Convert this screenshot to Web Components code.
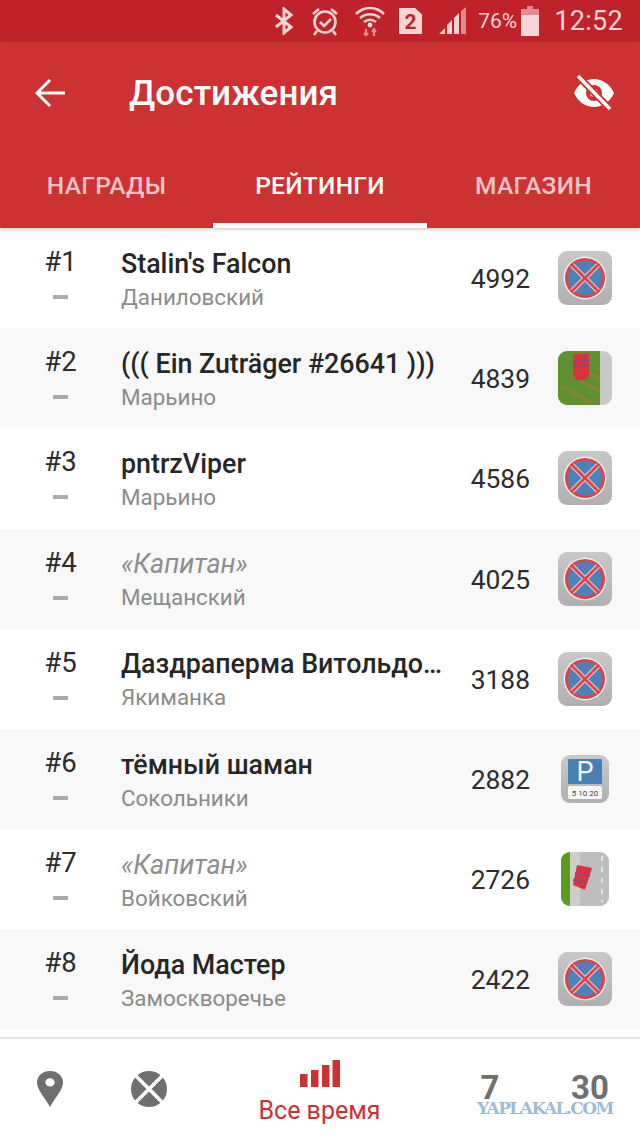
<!DOCTYPE html>
<html lang="ru">
<head>
<meta charset="utf-8">
<title>Достижения</title>
<style>
  html, body { margin: 0; padding: 0; background: #fff; }
  body { font-family: Roboto, "Liberation Sans", sans-serif; width: 640px; height: 1138px; overflow: hidden; display: flex; flex-direction: column; }
</style>
</head>
<body>
<status-bar></status-bar>
<app-header></app-header>
<rating-list>
  <rating-row rank="1" name="Stalin's Falcon" area="Даниловский" score="4992" sign="noparking"></rating-row>
  <rating-row rank="2" name="((( Ein Zuträger #26641 )))" area="Марьино" score="4839" sign="lawn" alt></rating-row>
  <rating-row rank="3" name="pntrzViper" area="Марьино" score="4586" sign="noparking"></rating-row>
  <rating-row rank="4" name="«Капитан»" area="Мещанский" score="4025" sign="noparking" alt anon></rating-row>
  <rating-row rank="5" name="Даздраперма Витольдо…" area="Якиманка" score="3188" sign="noparking"></rating-row>
  <rating-row rank="6" name="тёмный шаман" area="Сокольники" score="2882" sign="paid" alt></rating-row>
  <rating-row rank="7" name="«Капитан»" area="Войковский" score="2726" sign="road" anon></rating-row>
  <rating-row rank="8" name="Йода Мастер" area="Замоскворечье" score="2422" sign="noparking" alt></rating-row>
</rating-list>
<bottom-nav></bottom-nav>

<script>
class StatusBar extends HTMLElement {
  constructor() {
    super();
    this.attachShadow({ mode: 'open' });
    this.shadowRoot.innerHTML = `
      <style>
        :host { display: flex; align-items: center; justify-content: flex-end; height: 42px; background: #bf2329; color: #f6d5d6; padding-right: 17px; flex: none; }
        svg { display: block; flex: none; }
        .pct { font-size: 21px; margin-left: 11px; }
        .time { font-size: 27px; margin-left: 15px; letter-spacing: .3px; }
      </style>
      <svg width="22" height="28" viewBox="0 0 22 28" style="margin-right:16px" fill="none" stroke="#f6d5d6" stroke-width="3">
        <path d="M3 8l15 12-7 6V2l7 6L3 20"/>
      </svg>
      <svg width="28" height="30" viewBox="0 0 28 30" style="margin-right:16px" fill="none" stroke="#f6d5d6" stroke-width="2.6">
        <circle cx="14" cy="16" r="10.5"/>
        <path d="M9 16l4 4 7-7M2 8l6-5M26 8l-6-5M6 25l-3 4M22 25l3 4"/>
      </svg>
      <svg width="30" height="30" viewBox="0 0 30 30" style="margin-right:14px" fill="none" stroke="#f6d5d6" stroke-width="2.6">
        <path d="M1 8c8-8 20-8 28 0M5 12c6-5 14-5 20 0M9 16c4-3 8-3 12 0"/>
        <circle cx="15" cy="19" r="2.4" fill="#f6d5d6" stroke="none"/>
        <path d="M11 23v7M9 27l2 3 2-3M19 30v-7M17 26l2-3 2 3" stroke="#e08d90" stroke-width="2"/>
      </svg>
      <svg width="23" height="26" viewBox="0 0 23 28" style="margin-right:17px" preserveAspectRatio="none">
        <path d="M0 0h16l7 7v21H0z" fill="#f6d5d6"/>
        <text x="11.5" y="23" text-anchor="middle" font-family="Roboto, sans-serif" font-weight="700" font-size="21" fill="#bf2329">2</text>
      </svg>
      <svg width="28" height="28" viewBox="0 0 28 28">
        <path d="M0 27l6-6v6zM8 27V18l5-5v14zM15 27V11l5-5v21z" fill="#f6d5d6"/>
        <path d="M22 27V4l5-4v27z" fill="#e08d90"/>
      </svg>
      <span class="pct">76%</span>
      <svg width="18" height="30" viewBox="0 0 18 30" style="margin-left:4px">
        <path d="M6 0h6v3h6v6H0V3h6z" fill="#e08d90"/>
        <rect y="9" width="18" height="21" fill="#f6d5d6"/>
      </svg>
      <span class="time">12:52</span>`;
  }
}

class AppHeader extends HTMLElement {
  constructor() {
    super();
    this.attachShadow({ mode: 'open' });
    this.shadowRoot.innerHTML = `
      <style>
        :host { display: block; background: #cc3232; color: #fff; flex: none; box-shadow: 0 1px 4px rgba(0,0,0,.25); position: relative; }
        .top { display: flex; align-items: center; height: 101px; padding: 0 26px 0 35px; }
        .title { font-size: 35px; font-weight: 500; margin-left: 64px; flex: 1; padding-top: 2px; letter-spacing: .1px; }
        svg { display: block; flex: none; }
        .tabs { display: grid; grid-template-columns: 213px 214px 213px; height: 85px; }
        .tab { display: flex; align-items: center; justify-content: center; font-size: 24.5px; font-weight: 500; color: #f3c4c5; padding: 5px 0; box-sizing: border-box; letter-spacing: .3px; }
        .tab.on { color: #fff; border-bottom: 5px solid #fff; padding-bottom: 0; }
      </style>
      <div class="top">
        <svg width="30" height="30" viewBox="0 0 30 30" fill="none" stroke="#fff" stroke-width="3">
          <path d="M30 15H3M15 2L2 15l13 13"/>
        </svg>
        <div class="title">Достижения</div>
        <svg width="40" height="36" viewBox="0 0 40 36">
          <path fill="#fff" fill-rule="evenodd" d="M0 18C4 9 12 4 20 4s16 5 20 14c-4 9-12 14-20 14S4 27 0 18zm20-8a8 8 0 100 16 8 8 0 000-16z"/>
          <circle cx="20" cy="18" r="4" fill="#fff"/>
          <path d="M4 1l32 33" stroke="#cc3232" stroke-width="7"/>
          <path d="M4 1l32 33" stroke="#fff" stroke-width="3.4"/>
        </svg>
      </div>
      <div class="tabs">
        <div class="tab">НАГРАДЫ</div>
        <div class="tab on">РЕЙТИНГИ</div>
        <div class="tab">МАГАЗИН</div>
      </div>`;
  }
}

class RatingList extends HTMLElement {
  constructor() {
    super();
    this.attachShadow({ mode: 'open' });
    this.shadowRoot.innerHTML = `
      <style>
        :host { display: block; flex: 1; min-height: 0; overflow: hidden; }
      </style>
      <slot></slot>`;
  }
}

class SignIcon extends HTMLElement {
  static get observedAttributes() { return ['kind']; }
  attributeChangedCallback() { this.render(); }
  constructor() {
    super();
    this.attachShadow({ mode: 'open' });
  }
  render() {
    const art = {
      noparking: `
        <defs><linearGradient id="g" x1="0" y1="0" x2="0" y2="1"><stop offset="0" stop-color="#c8c8c8"/><stop offset="1" stop-color="#b0b0b0"/></linearGradient></defs>
        <rect width="54" height="54" rx="9" fill="url(#g)"/>
        <circle cx="27" cy="27" r="21.5" fill="#f0eeee"/>
        <circle cx="27" cy="27" r="20" fill="#d8454e"/>
        <circle cx="27" cy="27" r="17" fill="#4d82b8"/>
        <path d="M14 14l26 26M40 14L14 40" stroke="#eecbcd" stroke-width="5"/>
        <path d="M13 13l28 28M41 13L13 41" stroke="#d8454e" stroke-width="2.8"/>`,
      lawn: `
        <rect width="54" height="54" rx="9" fill="#c8c8c8"/>
        <path d="M9 0h33v54H9a9 9 0 01-9-9V9a9 9 0 019-9z" fill="#5f9130"/>
        <path d="M4 36l30 16M22 30l20 10M30 22l12 6" stroke="#98803a" stroke-width="3" opacity=".8"/>
        <path d="M15 3h16v21l-3 5H18l-3-5z" fill="#dc3240"/>
        <path d="M15 10h16M15 15h16" stroke="#8d4a72" stroke-width="2"/>`,
      paid: `
        <defs><linearGradient id="g" x1="0" y1="0" x2="0" y2="1"><stop offset="0" stop-color="#c9c9c9"/><stop offset="1" stop-color="#b0b0b0"/></linearGradient></defs>
        <rect width="48" height="48" rx="9" fill="url(#g)"/>
        <rect x="7" y="4" width="34" height="25" rx="1" fill="#4780b5"/>
        <text x="24" y="26" text-anchor="middle" font-family="Roboto, sans-serif" font-size="27" fill="#f3f6f9">P</text>
        <rect x="7" y="31" width="34" height="13" rx="1.5" fill="#f6f6f6"/>
        <text x="24" y="41" text-anchor="middle" font-family="Roboto, sans-serif" font-size="8" fill="#444">5 10 20</text>`,
      road: `
        <rect width="48" height="54" rx="9" fill="#bdbdbd"/>
        <path d="M9 0h0v54H9a9 9 0 01-9-9V9a9 9 0 019-9z" fill="#5c9b22"/>
        <rect x="9" width="10" height="54" fill="#cdcdcd"/>
        <path d="M41 4v46" stroke="#eee" stroke-width="1.6" stroke-dasharray="5 6"/>
        <path d="M16 13l15 3-7 22-12-5z" fill="#dc3240"/>
        <path d="M14 21l15 3M12 28l14 4" stroke="#8d4a72" stroke-width="2"/>`
    };
    const kind = this.getAttribute('kind');
    const w = kind === 'noparking' || kind === 'lawn' ? 54 : 48;
    const h = kind === 'paid' ? 48 : 54;
    this.shadowRoot.innerHTML = `
      <style>
        :host { display: flex; align-items: center; justify-content: center; width: 54px; height: 54px; }
        svg { display: block; }
      </style>
      <svg width="${w}" height="${h}" viewBox="0 0 ${w} ${h}">${art[kind] || ''}</svg>`;
  }
}

class RatingRow extends HTMLElement {
  connectedCallback() {
    if (this.shadowRoot) return;
    this.attachShadow({ mode: 'open' });
    const a = (n) => this.getAttribute(n);
    this.shadowRoot.innerHTML = `
      <style>
        :host { display: flex; align-items: center; height: 100.2px; box-sizing: border-box; padding-right: 28px; background: #fff; }
        :host([alt]) { background: #f8f8f8; }
        .rank { width: 121px; flex: none; display: flex; flex-direction: column; align-items: center; box-sizing: border-box; padding: 0 0 11px 0; }
        .num { font-size: 27.5px; color: #2c2c2c; line-height: 32px; }
        .dash { width: 15px; height: 4px; background: #ababab; margin-top: 17px; }
        .who { flex: 1; min-width: 0; padding-top: 2px; }
        .name { font-size: 26.8px; font-weight: 500; color: #262626; line-height: 34px; white-space: nowrap; }
        :host([anon]) .name { font-style: italic; font-weight: 400; color: #8e8e8e; }
        .area { font-size: 22.4px; color: #8b8b8b; line-height: 30px; margin-top: 1px; white-space: nowrap; }
        .score { font-size: 26.4px; color: #2c2c2c; margin-right: 28px; padding-top: 2px; }
        sign-icon { flex: none; }
      </style>
      <div class="rank"><div class="num">#${a('rank')}</div><div class="dash"></div></div>
      <div class="who"><div class="name">${a('name')}</div><div class="area">${a('area')}</div></div>
      <div class="score">${a('score')}</div>
      <sign-icon kind="${a('sign')}"></sign-icon>`;
  }
}

class BottomNav extends HTMLElement {
  constructor() {
    super();
    this.attachShadow({ mode: 'open' });
    this.shadowRoot.innerHTML = `
      <style>
        :host { display: grid; grid-template-columns: 99px 100px 241px 100px 100px; height: 101px; box-sizing: border-box; flex: none; background: #fff; border-top: 2px solid #e2e2e2; position: relative; }
        .cell { display: flex; flex-direction: column; align-items: center; justify-content: center; }
        svg { display: block; }
        .label { font-size: 25px; color: #cc3232; margin-top: 9px; }
        .big { font-size: 33px; font-weight: 700; line-height: 24px; color: #6f6f6f; padding-bottom: 2px; }
        .mark { position: absolute; left: 477px; top: 62px; font: 700 17px/15px "DejaVu Serif", serif; color: #9dbcd6; letter-spacing: -1.55px; }
      </style>
      <div class="cell">
        <svg width="26" height="36" viewBox="0 0 28 44" preserveAspectRatio="none">
          <path fill="#6f6f6f" fill-rule="evenodd" d="M14 0c8 0 14 6 14 14 0 9-9 19-14 30C9 33 0 23 0 14 0 6 6 0 14 0zm0 9a5 5 0 100 10 5 5 0 000-10z"/>
        </svg>
      </div>
      <div class="cell">
        <svg width="36" height="36" viewBox="0 0 36 36">
          <circle cx="18" cy="18" r="18" fill="#6f6f6f"/>
          <path d="M5 5l26 26M31 5L5 31" stroke="#fff" stroke-width="3.6"/>
        </svg>
      </div>
      <div class="cell" style="padding-top:8px">
        <svg width="40" height="27" viewBox="0 0 40 27" fill="#cc3232">
          <rect y="14" width="7.5" height="13"/><rect x="11" y="10" width="7.5" height="17"/><rect x="22" y="5" width="7.5" height="22"/><rect x="32.5" y="0" width="7.5" height="27"/>
        </svg>
        <div class="label">Все время</div>
      </div>
      <div class="cell big">7</div>
      <div class="cell big">30</div>
      <div class="mark">YAPLAKAL.COM</div>`;
  }
}

customElements.define('status-bar', StatusBar);
customElements.define('app-header', AppHeader);
customElements.define('rating-list', RatingList);
customElements.define('sign-icon', SignIcon);
customElements.define('rating-row', RatingRow);
customElements.define('bottom-nav', BottomNav);
</script>
</body>
</html>
